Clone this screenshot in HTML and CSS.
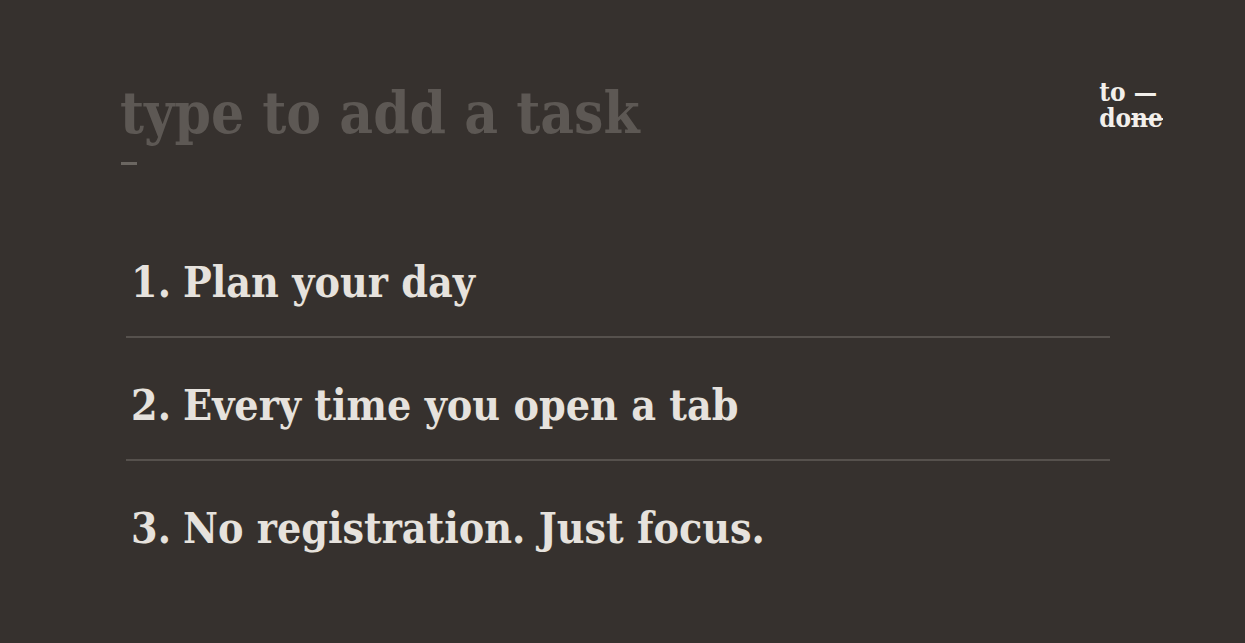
FILE: index.html
```html
<!DOCTYPE html>
<html lang="en">
<head>
    <meta charset="UTF-8">
    <title>to done</title>
    <link rel="stylesheet" href="styles.css">
</head>
<body>
    <div class="page">
        <header class="top">
            <div class="task-entry">
                <input type="text" class="task-input" placeholder="type to add a task">
                <span class="caret"></span>
            </div>
            <a href="#" class="logo">
                <span>to &mdash;</span>
                <span>do<s>ne</s></span>
            </a>
        </header>

        <ol class="task-list">
            <li class="task-item">Plan your day</li>
            <li class="task-item">Every time you open a tab</li>
            <li class="task-item">No registration. Just focus.</li>
        </ol>
    </div>
</body>
</html>
```

FILE: styles.css
```css
/* Base */
html, body {
    margin: 0;
    padding: 0;
    height: 100%;
}

body {
    background-color: #36312e;
    color: #e8e4df;
    font-family: "DejaVu Serif Condensed", "DejaVu Serif", serif;
}

.page {
    padding: 73px 82px 0 120px;
}

/* Header */
.top {
    display: flex;
    justify-content: space-between;
    align-items: flex-start;
}

.task-entry {
    display: flex;
    flex-direction: column;
    gap: 9px;
    flex: 1;
}

.task-input {
    background: transparent;
    border: none;
    outline: none;
    padding: 0;
    margin: 0;
    width: 100%;
    font-family: inherit;
    font-size: 58px;
    font-weight: bold;
    color: #e8e4df;
    height: 80px;
}

.task-input::placeholder {
    color: #5d5854;
}

.caret {
    display: block;
    width: 16px;
    height: 3px;
    margin-left: 1px;
    background-color: #6b6661;
}

.logo {
    display: flex;
    flex-direction: column;
    margin-top: 6px;
    color: #f2efeb;
    text-decoration: none;
    font-size: 26px;
    font-weight: bold;
    line-height: 26px;
}

.logo s {
    text-decoration-thickness: 2px;
}

/* List */
.task-list {
    list-style: none;
    counter-reset: task;
    margin: 50px 0 0 6px;
    padding: 0;
    max-width: 984px;
}

.task-item {
    counter-increment: task;
    display: flex;
    gap: 12px;
    font-size: 42.5px;
    font-weight: bold;
    color: #e6e2dd;
    padding: 42px 0 29px;
    border-bottom: 2px solid #56514d;
}

.task-item::before {
    content: counter(task) ".";
    width: 45px;
    text-align: right;
}

.task-item:last-child {
    border-bottom: none;
}
```
